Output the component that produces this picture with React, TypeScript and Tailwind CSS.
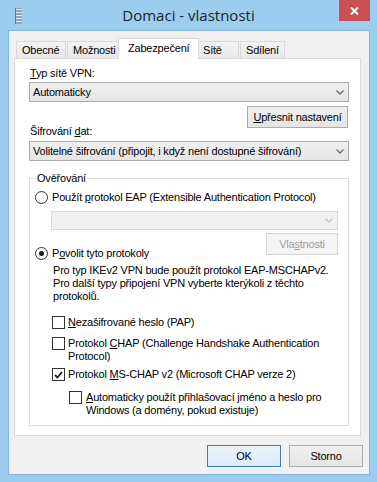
import React from "react";

function Chevron({ disabled }: { disabled?: boolean }) {
  return (
    <svg width="8" height="5" viewBox="0 0 8 5">
      <path
        d="M0.5 0.5 L4 4 L7.5 0.5"
        stroke={disabled ? "#c4c4c4" : "#6a6a6a"}
        strokeWidth="1.3"
        fill="none"
      />
    </svg>
  );
}

function CheckBox({ checked }: { checked?: boolean }) {
  return (
    <span className="flex h-[13px] w-[13px] shrink-0 items-center justify-center border border-[#333333] bg-white">
      {checked && (
        <svg width="9" height="8" viewBox="0 0 9 8">
          <path d="M1 4 L3.5 6.5 L8 1" stroke="#1a1a1a" strokeWidth="1.8" fill="none" />
        </svg>
      )}
    </span>
  );
}

function Radio({ checked }: { checked?: boolean }) {
  return (
    <span className="flex h-[13px] w-[13px] shrink-0 items-center justify-center rounded-full border border-[#333333] bg-white">
      {checked && <span className="h-[5px] w-[5px] rounded-full bg-[#1a1a1a]" />}
    </span>
  );
}

export default function App() {
  return (
    <div className="h-[482px] w-[377px] overflow-hidden bg-[#9ccdee] font-['Liberation_Sans',Arial,sans-serif] text-[11px] leading-[13px] tracking-[-0.2px] text-black">
      {/* title bar */}
      <div className="grid h-[30px] grid-cols-[1fr_auto_1fr]">
        <div className="pl-[15px] pt-[8px]">
          <svg width="7" height="16" viewBox="0 0 7 16">
            <rect x="0" y="0" width="7" height="16" fill="#8fa4bb" />
            <rect x="0" y="1" width="7" height="1" fill="#dfe6ee" />
            <rect x="0" y="4" width="7" height="1" fill="#dfe6ee" />
            <rect x="0" y="7" width="7" height="1" fill="#dfe6ee" />
            <rect x="0" y="10" width="7" height="1" fill="#dfe6ee" />
            <rect x="0" y="13" width="7" height="1" fill="#dfe6ee" />
            <rect x="0" y="0" width="1" height="16" fill="#5f7893" />
          </svg>
        </div>
        <div className="pt-[5px] font-['Open_Sans',sans-serif] text-[15px] leading-[20px] tracking-normal text-[#222]">
          Domaci - vlastnosti
        </div>
        <div className="flex justify-end pr-[7px]">
          <div className="flex h-[21px] w-[31px] items-center justify-center bg-[#c75050]">
            <svg width="9" height="8" viewBox="0 0 9 8">
              <path d="M1 0.5 L8 7.5 M8 0.5 L1 7.5" stroke="#ffffff" strokeWidth="2" />
            </svg>
          </div>
        </div>
      </div>

      {/* client area */}
      <div className="ml-[8px] h-[445px] w-[362px] border border-[#83b5da] bg-[#f0f0f0]">
        <div className="flex items-end pl-[7px] pt-[7px]">
          <div className="h-[17px] w-[50px] border border-b-0 border-[#d9d9d9] bg-linear-to-b from-[#f3f3f3] to-[#e8e8e8] pl-[5px] pt-[2px]">
            Obecné
          </div>
          <div className="ml-px h-[17px] w-[52px] border border-b-0 border-[#d9d9d9] bg-linear-to-b from-[#f3f3f3] to-[#e8e8e8] pl-[5px] pt-[2px]">
            Možnosti
          </div>
          <div className="relative z-10 -mb-px -ml-px h-[21px] w-[81px] border border-b-0 border-[#d9d9d9] bg-white pl-[9px] pt-[3px]">
            Zabezpečení
          </div>
          <div className="-ml-px h-[17px] w-[41px] border border-b-0 border-[#d9d9d9] bg-linear-to-b from-[#f3f3f3] to-[#e8e8e8] pl-[4px] pt-[2px]">
            Sítě
          </div>
          <div className="ml-px h-[17px] w-[45px] border border-b-0 border-[#d9d9d9] bg-linear-to-b from-[#f3f3f3] to-[#e8e8e8] pl-[5px] pt-[2px]">
            Sdílení
          </div>
        </div>

        {/* tab panel */}
        <div className="ml-[5px] h-[378px] w-[347px] border border-[#d9d9d9] bg-white pl-[14px] pr-[11px] pt-[8px]">
          <div className="pl-px">
            <span className="underline">T</span>yp sítě VPN:
          </div>
          <div className="mt-[2px] flex h-[20px] items-center justify-between border border-[#acacac] bg-linear-to-b from-[#f0f0f0] to-[#e5e5e5] pl-[3px] pr-[4px]">
            <span>Automaticky</span>
            <Chevron />
          </div>
          <div className="mt-[4px] flex justify-end pr-px">
            <button className="h-[22px] w-[101px] border border-[#acacac] bg-linear-to-b from-[#f0f0f0] to-[#e5e5e5] text-center">
              <span className="underline">U</span>přesnit nastavení
            </button>
          </div>
          <div className="-mt-[3px] pl-px">
            Šifrování <span className="underline">d</span>at:
          </div>
          <div className="mt-[3px] flex h-[20px] items-center justify-between border border-[#acacac] bg-linear-to-b from-[#f0f0f0] to-[#e5e5e5] pl-[3px] pr-[4px]">
            <span>Volitelné šifrování (připojit, i když není dostupné šifrování)</span>
            <Chevron />
          </div>

          {/* group box */}
          <div className="relative mt-[17px] h-[248px] border border-[#dcdcdc] pl-[5px] pr-[10px]">
            <span className="absolute -top-[7px] left-[6px] bg-white px-px">Ověřování</span>
            <div className="mt-[12px] flex items-center gap-[4px]">
              <Radio />
              <span>
                Použít <span className="underline">p</span>rotokol EAP (Extensible Authentication Protocol)
              </span>
            </div>
            <div className="ml-[16px] mt-[7px] flex h-[19px] items-center justify-end border border-[#d9d9d9] bg-[#f0f0f0] pr-[4px]">
              <Chevron disabled />
            </div>
            <div className="flex items-start justify-between">
              <div className="mt-[17px] flex items-center gap-[4px]">
                <Radio checked />
                <span>
                  P<span className="underline">o</span>volit tyto protokoly
                </span>
              </div>
              <button className="mt-[3px] h-[22px] w-[72px] border border-[#d5d5d5] bg-[#f4f4f4] text-center text-[#9c9c9c]">
                Vla<span className="underline">s</span>tnosti
              </button>
            </div>
            <div className="ml-[18px] mt-[4px]">
              Pro typ IKEv2 VPN bude použít protokol EAP-MSCHAPv2.
              <br />
              Pro další typy připojení VPN vyberte kterýkoli z těchto
              <br />
              protokolů.
            </div>
            <div className="ml-[17px] mt-[13px] flex items-center gap-[3px]">
              <CheckBox />
              <span>
                <span className="underline">N</span>ezašifrované heslo (PAP)
              </span>
            </div>
            <div className="ml-[17px] mt-[8px] flex items-start gap-[3px]">
              <CheckBox />
              <span>
                Protokol <span className="underline">C</span>HAP (Challenge Handshake Authentication
                <br />
                Protocol)
              </span>
            </div>
            <div className="ml-[17px] mt-[5px] flex items-center gap-[3px]">
              <CheckBox checked />
              <span>
                Protokol <span className="underline">M</span>S-CHAP v2 (Microsoft CHAP verze 2)
              </span>
            </div>
            <div className="ml-[34px] mt-[10px] flex items-start gap-[4px]">
              <CheckBox />
              <span>
                <span className="underline">A</span>utomaticky použít přihlašovací jméno a heslo pro
                <br />
                Windows (a domény, pokud existuje)
              </span>
            </div>
          </div>
        </div>

        {/* buttons */}
        <div className="mt-[9px] flex justify-end gap-[8px] pr-[6px]">
          <button className="h-[22px] w-[74px] border border-[#3c7fb1] bg-linear-to-b from-[#eaf3fb] to-[#dcecfc] text-center">
            OK
          </button>
          <button className="h-[22px] w-[74px] border border-[#acacac] bg-linear-to-b from-[#f0f0f0] to-[#e5e5e5] text-center">
            Storno
          </button>
        </div>
      </div>
    </div>
  );
}
